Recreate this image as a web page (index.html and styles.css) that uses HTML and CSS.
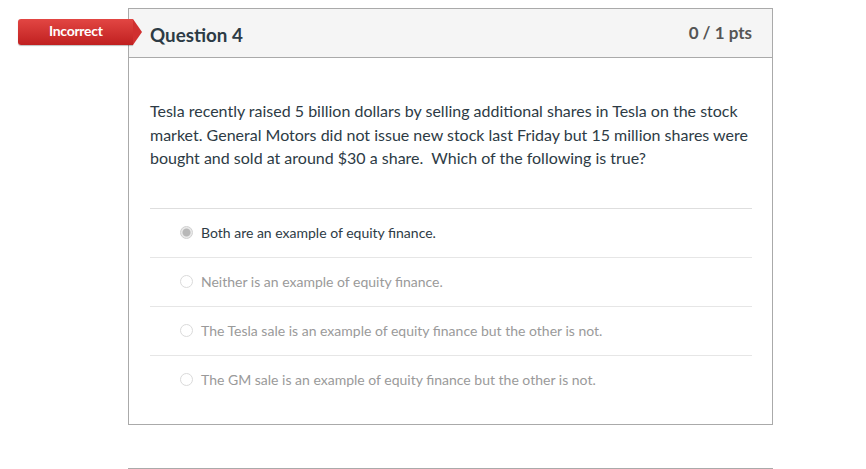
FILE: index.html
```html
<!DOCTYPE html>
<html>
<head>
<meta charset="utf-8">
<link rel="stylesheet" href="styles.css">
</head>
<body>
<div class="page">
  <div class="quiz">
    <div class="card">
      <div class="badge">Incorrect</div>
      <div class="card-header">
        <span class="title">Question 4</span>
        <span class="pts">0 / 1 pts</span>
      </div>
      <div class="card-body">
        <p class="question">Tesla recently raised 5 billion dollars by selling additional shares in Tesla on the stock market. General Motors did not issue new stock last Friday but 15 million shares were bought and sold at around $30 a share.&nbsp; Which of the following is true?</p>
        <div class="answers">
          <div class="answer selected"><span class="radio"></span><span class="label">Both are an example of equity finance.</span></div>
          <div class="answer"><span class="radio"></span><span class="label">Neither is an example of equity finance.</span></div>
          <div class="answer"><span class="radio"></span><span class="label">The Tesla sale is an example of equity finance but the other is not.</span></div>
          <div class="answer"><span class="radio"></span><span class="label">The GM sale is an example of equity finance but the other is not.</span></div>
        </div>
      </div>
    </div>
    <div class="card next"></div>
  </div>
</div>
</body>
</html>
```
FILE: styles.css
```css
html, body {
  margin: 0;
  padding: 0;
  background: #fff;
}
body {
  font-family: Lato, "Noto Sans", sans-serif;
  color: #2d3b45;
  overflow: hidden;
  height: 469px;
}
.page {
  padding-top: 8px;
  padding-left: 128px;
}
.quiz {
  width: 645px;
  display: flex;
  flex-direction: column;
  gap: 43px;
}
.card {
  position: relative;
  border: 1px solid #aaaaaa;
  box-sizing: border-box;
}
.card.next {
  height: 2px;
  border-bottom: none;
}
.badge {
  position: absolute;
  left: -111px;
  top: 10px;
  width: 115px;
  height: 26px;
  box-sizing: border-box;
  background: linear-gradient(#e24643, #c02020);
  border-radius: 3px 0 0 3px;
  color: #fff;
  font-weight: 700;
  font-size: 14px;
  line-height: 24px;
  padding-left: 31px;
  letter-spacing: -0.3px;
  box-shadow: 0 1px 1px rgba(0,0,0,0.25);
}
.badge::after {
  content: "";
  position: absolute;
  right: -9px;
  top: 0;
  width: 0;
  height: 0;
  border-top: 13px solid transparent;
  border-bottom: 13px solid transparent;
  border-left: 9px solid #d03030;
}
.card-header {
  background: #f5f5f5;
  border-bottom: 1px solid #aaaaaa;
  height: 49px;
  box-sizing: border-box;
  padding: 0 20px 0 21px;
  display: flex;
  align-items: center;
  justify-content: space-between;
}
.title {
  font-size: 18.8px;
  font-weight: 700;
  color: #2d3b45;
  padding-top: 2px;
}
.pts {
  font-size: 17px;
  font-weight: 700;
  color: #555;
  padding-bottom: 2px;
}
.card-body {
  padding: 41px 20px 20px 21px;
}
.question {
  margin: 0 0 38px 0;
  font-size: 16px;
  line-height: 23.5px;
}
.answers {
  border-top: 1px solid #dedede;
}
.answer {
  height: 48px;
  display: flex;
  align-items: center;
  padding-left: 30px;
  border-bottom: 1px solid #e6e6e6;
  font-size: 14px;
  color: #9a9a9a;
}
.answer:last-child {
  border-bottom: none;
}
.answer.selected {
  color: #2d3b45;
}
.radio {
  width: 11px;
  height: 11px;
  border: 1px solid #dadada;
  border-radius: 50%;
  margin-right: 8px;
  box-sizing: content-box;
  background: #fff;
}
.answer.selected .radio {
  border-color: #d0d0d0;
  background: radial-gradient(circle, #b8b8b8 0, #b8b8b8 3.5px, #e9e9e9 4.5px, #e9e9e9 100%);
}
```
